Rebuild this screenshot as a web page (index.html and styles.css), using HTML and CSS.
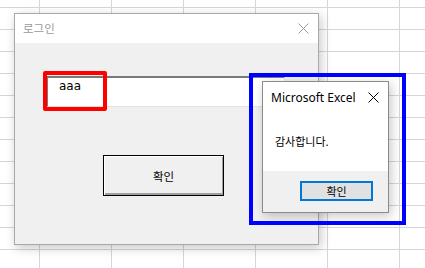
FILE: index.html
```html
<!DOCTYPE html>
<html lang="ko">
<head>
    <meta charset="UTF-8">
    <meta name="viewport" content="width=device-width, initial-scale=1.0">
    <title>로그인</title>
    <link rel="stylesheet" href="styles.css">
</head>
<body>

    <!-- 로그인 창 -->
    <div class="window login-window">
        <div class="titlebar">
            <span class="title">로그인</span>
            <svg class="close" width="11" height="11" viewBox="0 0 11 11">
                <path d="M0.5 0.5 L10.5 10.5 M10.5 0.5 L0.5 10.5" stroke="#9a9a9a" stroke-width="1" fill="none"/>
            </svg>
        </div>
        <div class="login-body">
            <div class="textbox">aaa</div>
            <button class="classic-button">확인</button>
        </div>
    </div>

    <!-- 메시지 박스 -->
    <div class="window msgbox">
        <div class="msgbox-main">
            <div class="msgbox-title">
                <span>Microsoft Excel</span>
                <svg class="close" width="11" height="11" viewBox="0 0 11 11">
                    <path d="M0.5 0.5 L10.5 10.5 M10.5 0.5 L0.5 10.5" stroke="#000" stroke-width="1" fill="none"/>
                </svg>
            </div>
            <div class="msgbox-text">감사합니다.</div>
        </div>
        <div class="msgbox-footer">
            <button class="ok-button">확인</button>
        </div>
    </div>

    <!-- 강조 표시 -->
    <div class="mark mark-red"></div>
    <div class="mark mark-blue"></div>

</body>
</html>
```

FILE: styles.css
```css
body {
    margin: 0;
    width: 425px;
    height: 268px;
    overflow: hidden;
    position: relative;
    background-color: #fff;
    background-image:
        linear-gradient(to right, #d6d6d6 1px, transparent 1px),
        linear-gradient(to bottom, #d6d6d6 1px, transparent 1px);
    background-size: 72px 22px;
    background-position: 39px 7px;
    font-family: "Noto Sans", "Noto Sans CJK KR", sans-serif;
}

.window {
    position: absolute;
    box-sizing: border-box;
    display: flex;
    flex-direction: column;
}

/* 로그인 창 */
.login-window {
    left: 14px;
    top: 13px;
    width: 305px;
    height: 232px;
    border: 1px solid #a8a8a8;
    box-shadow: 2px 3px 10px rgba(0, 0, 0, 0.22);
}

.titlebar {
    height: 29px;
    background: #fff;
    display: flex;
    align-items: center;
    justify-content: space-between;
    padding: 0 9px 0 8px;
}

.title {
    font-family: "Noto Sans CJK KR", sans-serif;
    font-size: 11.5px;
    color: #9a9a9a;
    margin-top: -1px;
}

.titlebar .close {
    margin-top: -1px;
}

.login-body {
    flex: 1;
    background: #f0f0f0;
    display: flex;
    flex-direction: column;
    align-items: flex-start;
    padding: 33px 0 0 31px;
}

.textbox {
    box-sizing: border-box;
    width: 239px;
    height: 31px;
    background: #fff;
    border-style: solid;
    border-width: 2px 1px 1px 2px;
    border-color: #7a7a7a #e3e3e3 #e3e3e3 #7a7a7a;
    font-family: "DejaVu Sans", sans-serif;
    font-size: 12px;
    line-height: 13px;
    padding: 2px 0 0 11px;
}

.classic-button {
    box-sizing: border-box;
    margin: 48px 0 0 57px;
    width: 121px;
    height: 41px;
    border: 1px solid #000;
    background: #f0f0f0;
    box-shadow: inset 1px 1px #fff, inset -1px -2px #a0a0a0;
    font-family: "Noto Sans CJK KR", sans-serif;
    font-size: 11.5px;
    color: #000;
    padding: 0;
}

/* 메시지 박스 */
.msgbox {
    left: 262px;
    top: 81px;
    width: 127px;
    height: 132px;
    border: 1px solid #8a8a8a;
    box-shadow: 2px 3px 10px rgba(0, 0, 0, 0.22);
}

.msgbox-main {
    flex: 1;
    background: #fff;
}

.msgbox-title {
    height: 30px;
    display: flex;
    align-items: center;
    justify-content: space-between;
    padding: 0 9px 0 8px;
    font-size: 12px;
    color: #000;
}

.msgbox-text {
    font-family: "Noto Sans CJK KR", sans-serif;
    font-size: 11px;
    padding: 21px 0 0 12px;
}

.msgbox-footer {
    height: 41px;
    background: #f0f0f0;
    display: flex;
    justify-content: flex-end;
    align-items: flex-start;
    padding: 10px 15px 0 0;
    box-sizing: border-box;
}

.ok-button {
    width: 73px;
    height: 20px;
    box-sizing: border-box;
    border: 2px solid #0078d7;
    background: #e1e1e1;
    font-family: "Noto Sans CJK KR", sans-serif;
    font-size: 11px;
    color: #000;
    padding: 0;
}

/* 빨간/파란 표시 */
.mark {
    position: absolute;
    box-sizing: border-box;
}

.mark-red {
    left: 43px;
    top: 71px;
    width: 64px;
    height: 40px;
    border: 4px solid #ff0000;
    border-radius: 2px;
}

.mark-blue {
    left: 249px;
    top: 73px;
    width: 157px;
    height: 152px;
    border: 4px solid #0000ff;
}
```
